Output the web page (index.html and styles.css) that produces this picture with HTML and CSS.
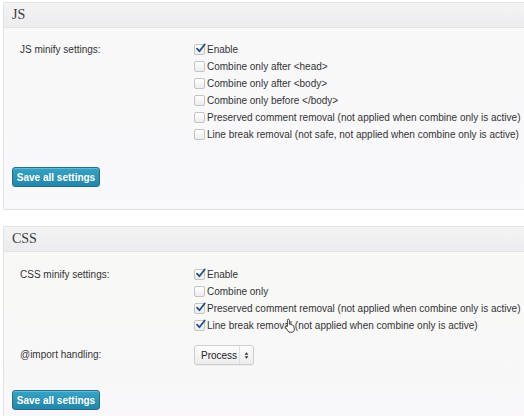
FILE: index.html
```html
<!DOCTYPE html>
<html>
<head>
<meta charset="utf-8">
<link rel="stylesheet" href="styles.css">
</head>
<body>
<div class="page">
  <section class="box box-js">
    <h3 class="box-title">JS</h3>
    <div class="box-body">
      <div class="setting">
        <div class="label">JS minify settings:</div>
        <div class="options">
          <div class="opt"><span class="cb on"><svg viewBox="0 0 12 12"><path d="M2.2 6.2 L4.8 9 L10.6 1.6" /></svg></span>Enable</div>
          <div class="opt"><span class="cb"></span>Combine only after &lt;head&gt;</div>
          <div class="opt"><span class="cb"></span>Combine only after &lt;body&gt;</div>
          <div class="opt"><span class="cb"></span>Combine only before &lt;/body&gt;</div>
          <div class="opt"><span class="cb"></span>Preserved comment removal (not applied when combine only is active)</div>
          <div class="opt"><span class="cb"></span>Line break removal (not safe, not applied when combine only is active)</div>
        </div>
      </div>
      <button class="save">Save all settings</button>
    </div>
  </section>

  <section class="box box-css">
    <h3 class="box-title">CSS</h3>
    <div class="box-body">
      <div class="setting">
        <div class="label">CSS minify settings:</div>
        <div class="options">
          <div class="opt"><span class="cb on"><svg viewBox="0 0 12 12"><path d="M2.2 6.2 L4.8 9 L10.6 1.6" /></svg></span>Enable</div>
          <div class="opt"><span class="cb"></span>Combine only</div>
          <div class="opt"><span class="cb on"><svg viewBox="0 0 12 12"><path d="M2.2 6.2 L4.8 9 L10.6 1.6" /></svg></span>Preserved comment removal (not applied when combine only is active)</div>
          <div class="opt cursor-host"><span class="cb on"><svg viewBox="0 0 12 12"><path d="M2.2 6.2 L4.8 9 L10.6 1.6" /></svg></span>Line break removal (not applied when combine only is active)
            <svg class="cursor" viewBox="0 0 14 16"><path d="M4.5 1.2c.8 0 1.3.6 1.3 1.3v4.2l.3-.1c.6-.3 1.3 0 1.5.6.6-.3 1.3 0 1.5.6.6-.2 1.3.1 1.4.8l.6 3.2c.2 1.5-.4 2.6-1.4 3.4H5.3L2 10.6c-.5-.6-.4-1.4.2-1.7.5-.3 1.1-.2 1.5.2V2.5c0-.7.1-1.3.8-1.3z" fill="#fff" stroke="#222" stroke-width="0.9"/></svg>
          </div>
        </div>
      </div>
      <div class="setting import">
        <div class="label">@import handling:</div>
        <div class="options">
          <div class="select"><span class="sel-text">Process</span><span class="sel-arrows"><svg viewBox="0 0 6 10"><path d="M3 1 L5.2 4 H0.8 Z M3 9 L5.2 6 H0.8 Z" fill="#333"/></svg></span></div>
        </div>
      </div>
      <button class="save">Save all settings</button>
    </div>
  </section>
</div>
</body>
</html>
```
FILE: styles.css
```css
html, body {
  margin: 0;
  padding: 0;
  background: #ffffff;
}
body {
  font-family: "Liberation Sans", Arial, sans-serif;
  font-size: 10px;
  color: #333;
  width: 524px;
  height: 416px;
  overflow: hidden;
}
.page {
  padding: 2px 0 0 3px;
  display: flex;
  flex-direction: column;
  gap: 16px;
}
.box {
  border: 1px solid #e2e2e4;
  border-right: none;
  background: linear-gradient(#f8f8f9, #f9f8fa);
  border-radius: 2px 0 0 2px;
}
.box-title {
  margin: 0;
  height: 24px;
  line-height: 24px;
  padding-left: 8px;
  font-family: "Liberation Serif", "DejaVu Serif", serif;
  font-weight: normal;
  font-size: 14px;
  color: #3a3a3a;
  background: linear-gradient(#f4f4f5, #ececee);
  border-bottom: 1px solid #e3e3e5;
}
.box-body {
  padding: 13px 0 22px 16px;
  display: flex;
  flex-direction: column;
  align-items: flex-start;
}
.box-css .box-body {
  padding-top: 14px;
  background: linear-gradient(#f8f9f6, #f9f7fa);
  min-height: 150px;
}
.setting {
  display: flex;
  align-items: flex-start;
}
.label {
  width: 174px;
  line-height: 17px;
  color: #333;
}
.options {
  display: flex;
  flex-direction: column;
}
.opt {
  height: 17px;
  line-height: 17px;
  display: flex;
  align-items: center;
  white-space: nowrap;
  color: #333;
}
.cb {
  width: 9px;
  height: 9px;
  border: 1px solid #c4c4c4;
  border-radius: 2px;
  background: linear-gradient(#ffffff, #ececec);
  margin-right: 2px;
  position: relative;
  flex: none;
}
.cb svg {
  position: absolute;
  left: 0;
  top: -2px;
  width: 11px;
  height: 11px;
  overflow: visible;
}
.cb svg path {
  fill: none;
  stroke: #1f4f8c;
  stroke-width: 2;
  stroke-linecap: round;
  stroke-linejoin: round;
}
.cursor-host {
  position: relative;
}
.cursor {
  position: absolute;
  left: 90px;
  top: 1px;
  width: 13px;
  height: 15px;
}
.save {
  margin-top: 24px;
  margin-left: -8px;
  width: 88px;
  height: 20px;
  padding: 0;
  border: 1px solid #1f6f8e;
  border-radius: 3px;
  background: linear-gradient(#36a3c5, #2386aa);
  color: #fff;
  font-family: "Liberation Sans", Arial, sans-serif;
  font-size: 10px;
  font-weight: bold;
  text-align: center;
  white-space: nowrap;
  box-shadow: inset 0 1px 0 rgba(255,255,255,0.25);
}
.box-css .save {
  margin-top: 25px;
}
.import {
  margin-top: 11px;
  align-items: center;
}
.import .label {
  line-height: 20px;
}
.select {
  width: 58px;
  height: 18px;
  border: 1px solid #cfcfcf;
  border-radius: 3px;
  background: linear-gradient(#fdfdfd, #ececec);
  display: flex;
  align-items: center;
  box-shadow: 0 1px 1px rgba(0,0,0,0.06);
}
.sel-text {
  flex: 1;
  padding-left: 6px;
  color: #222;
}
.sel-arrows {
  width: 13px;
  height: 18px;
  border-left: 1px solid #e0e0e0;
  display: flex;
  align-items: center;
  justify-content: center;
}
.sel-arrows svg {
  width: 5px;
  height: 9px;
}
```
